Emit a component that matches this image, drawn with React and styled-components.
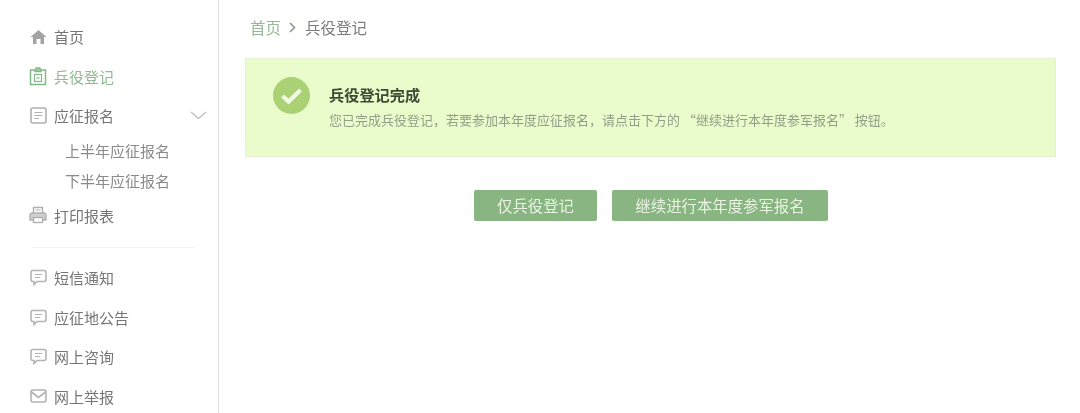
import React from "react";
import styled, { createGlobalStyle } from "styled-components";

const GlobalStyle = createGlobalStyle`
  html, body {
    margin: 0;
    height: 100%;
    overflow: hidden;
    background: #fff;
    font-family: "Noto Sans CJK SC", "Liberation Sans", sans-serif;
  }
`;

const Page = styled.div`
  width: 1080px;
  height: 413px;
  display: flex;
  overflow: hidden;
  filter: blur(0.45px);
`;

const Sidebar = styled.aside`
  width: 219px;
  height: 413px;
  flex: none;
  box-sizing: border-box;
  border-right: 1px solid #e2e2e2;
  padding: 17px 0 0 29px;
  overflow: hidden;
`;

const MenuItem = styled.div`
  height: 39.5px;
  display: flex;
  align-items: center;
  gap: 7px;
  font-size: 15px;
  color: ${(p) => (p.$active ? "#8dbb90" : "#757575")};
`;

const IconBox = styled.span`
  width: 18px;
  height: 18px;
  flex: none;
  display: flex;
  align-items: center;
  justify-content: center;
`;

const Chevron = styled.svg`
  margin-left: 69px;
`;

const SubMenu = styled.div`
  padding: 0 0 0 36px;
`;

const SubItem = styled.div`
  height: 30px;
  line-height: 30px;
  font-size: 15px;
  color: #8a8a8a;
`;

const Divider = styled.div`
  width: 163px;
  height: 1px;
  background: #f3f3f3;
  margin: 12px 0 10px 3px;
`;

const Main = styled.main`
  flex: 1;
  padding: 15px 24px 0 26px;
`;

const Crumbs = styled.div`
  display: flex;
  align-items: center;
  margin-left: 5px;
  height: 24px;
  font-size: 15.5px;
  color: #7d7d7d;
`;

const CrumbLink = styled.span`
  color: #93b995;
`;

const CrumbSep = styled.svg`
  margin: 0 9px 0 8px;
`;

const Banner = styled.section`
  margin-top: 19px;
  height: 99px;
  box-sizing: border-box;
  background: #ebfccc;
  border: 1px solid #e6f0d2;
  padding: 18px 0 0 27px;
  display: flex;
  gap: 19px;
`;

const CheckCircle = styled.div`
  width: 37px;
  height: 37px;
  flex: none;
  border-radius: 50%;
  background: #abd175;
  display: flex;
  align-items: center;
  justify-content: center;
`;

const BannerText = styled.div`
  padding-top: 6px;
`;

const BannerTitle = styled.div`
  font-size: 15.2px;
  line-height: 22px;
  font-weight: 700;
  color: #3b4a34;
`;

const BannerDesc = styled.div`
  margin-top: 6px;
  font-size: 13px;
  line-height: 18px;
  color: #919f86;
  white-space: nowrap;
`;

const Actions = styled.div`
  margin-top: 33px;
  margin-left: 229px;
  display: flex;
  gap: 15px;
`;

const ActionButton = styled.button`
  width: ${(p) => p.$w}px;
  height: 31px;
  padding: 0;
  border: 0;
  border-radius: 2px;
  background: #88b582;
  color: #e8f3e2;
  font-family: inherit;
  font-size: 15.4px;
  line-height: 31px;
`;

const Home = () => (
  <svg width="17" height="16" viewBox="0 0 17 16">
    <path d="M8.5 1 L16.5 8 L14 8 L14 15 L10.5 15 L10.5 10 L6.5 10 L6.5 15 L3 15 L3 8 L.5 8 Z" fill="#a3a3a3" />
  </svg>
);

const Clipboard = () => (
  <svg width="18" height="19" viewBox="0 0 18 19" fill="none" stroke="#82b886" strokeWidth="1.5">
    <path d="M5.5 3 H1.5 V17.5 H16.5 V3 H12.5" />
    <path d="M6 4.5 V2.5 L7.5 1 H10.5 L12 2.5 V4.5 Z" fill="#a8cfa9" />
    <rect x="5.5" y="7.5" width="7" height="7" strokeWidth="1.2" />
    <path d="M7.5 11 H10.5" strokeWidth="1.2" />
  </svg>
);

const Doc = () => (
  <svg width="17" height="17" viewBox="0 0 17 17" fill="none" stroke="#b0b0b0" strokeWidth="1.6">
    <rect x="1" y="1" width="15" height="15" rx="2" />
    <path d="M4.5 5.5 H12.5 M4.5 8.5 H12.5 M4.5 11.5 H9" strokeWidth="1.2" />
  </svg>
);

const Printer = () => (
  <svg width="18" height="18" viewBox="0 0 18 18" fill="none" stroke="#b0b0b0" strokeWidth="1.4">
    <path d="M4.5 7 V1.5 H13.5 V7" />
    <path d="M6.5 4 H11.5" strokeWidth="1" />
    <path d="M4 14 H1 V8.5 L2.5 7 H15.5 L17 8.5 V14 H14" fill="#cfcfcf" />
    <rect x="4.5" y="11.5" width="9" height="5" fill="#fff" />
  </svg>
);

const Message = () => (
  <svg width="17" height="17" viewBox="0 0 17 17" fill="none" stroke="#b3b3b3" strokeWidth="1.6">
    <path d="M3 1.5 H14 Q16 1.5 16 3.5 V10.5 Q16 12.5 14 12.5 H7 L4 15.5 V12.5 H3 Q1 12.5 1 10.5 V3.5 Q1 1.5 3 1.5 Z" />
    <path d="M5 5.5 H12 M5 8.5 H10" strokeWidth="1.1" />
  </svg>
);

const Mail = () => (
  <svg width="17" height="14" viewBox="0 0 17 14" fill="none" stroke="#b3b3b3" strokeWidth="1.6">
    <rect x="1" y="1" width="15" height="12" rx="2" />
    <path d="M1.5 3 L8.5 8.5 L15.5 3" />
  </svg>
);

const App = () => (
  <Page>
    <GlobalStyle />
    <Sidebar>
      <MenuItem><IconBox><Home /></IconBox>首页</MenuItem>
      <MenuItem $active><IconBox><Clipboard /></IconBox>兵役登记</MenuItem>
      <MenuItem>
        <IconBox><Doc /></IconBox>应征报名
        <Chevron width="17" height="9" viewBox="0 0 17 9" fill="none" stroke="#bcbcbc" strokeWidth="1.2">
          <path d="M1 1 L8.5 7.5 L16 1" />
        </Chevron>
      </MenuItem>
      <SubMenu>
        <SubItem>上半年应征报名</SubItem>
        <SubItem>下半年应征报名</SubItem>
      </SubMenu>
      <MenuItem><IconBox><Printer /></IconBox>打印报表</MenuItem>
      <Divider />
      <MenuItem><IconBox><Message /></IconBox>短信通知</MenuItem>
      <MenuItem><IconBox><Message /></IconBox>应征地公告</MenuItem>
      <MenuItem><IconBox><Message /></IconBox>网上咨询</MenuItem>
      <MenuItem><IconBox><Mail /></IconBox>网上举报</MenuItem>
    </Sidebar>
    <Main>
      <Crumbs>
        <CrumbLink>首页</CrumbLink>
        <CrumbSep width="7" height="11" viewBox="0 0 7 11" fill="none" stroke="#8a9a8a" strokeWidth="1.6">
          <path d="M1 1 L5.5 5.5 L1 10" />
        </CrumbSep>
        兵役登记
      </Crumbs>
      <Banner>
        <CheckCircle>
          <svg width="23" height="18" viewBox="0 0 23 18" fill="none" stroke="#f2f8e6" strokeWidth="4.2">
            <path d="M2.5 9 L8.5 14.5 L20.5 3" />
          </svg>
        </CheckCircle>
        <BannerText>
          <BannerTitle>兵役登记完成</BannerTitle>
          <BannerDesc>您已完成兵役登记，若要参加本年度应征报名，请点击下方的 “继续进行本年度参军报名” 按钮。</BannerDesc>
        </BannerText>
      </Banner>
      <Actions>
        <ActionButton $w={123}>仅兵役登记</ActionButton>
        <ActionButton $w={216}>继续进行本年度参军报名</ActionButton>
      </Actions>
    </Main>
  </Page>
);

export default App;
